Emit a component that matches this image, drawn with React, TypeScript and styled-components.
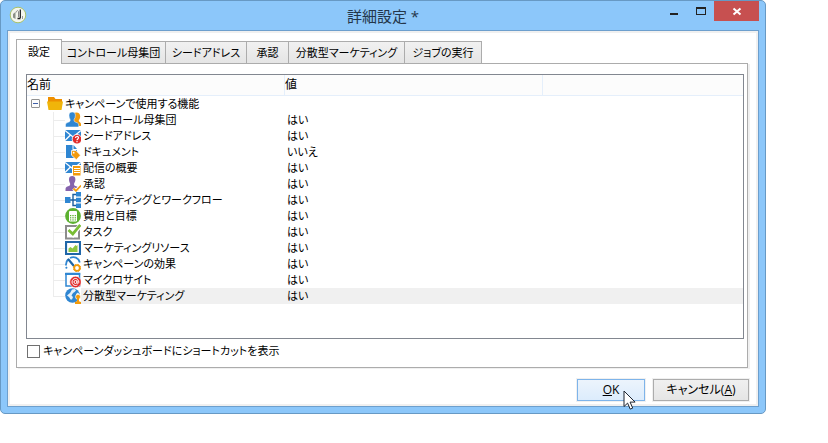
import React, { useState } from "react";
import styled, { createGlobalStyle, css } from "styled-components";

const GlobalStyle = createGlobalStyle`
  * { box-sizing: border-box; }
  body {
    margin: 0;
    background: #fff;
    color: #000;
    font: 11px/16px "Open Sans", "Noto Sans CJK JP", sans-serif;
    font-feature-settings: "palt";
  }
  button, input { font: inherit; font-feature-settings: inherit; color: inherit; margin: 0; }
`;

const Page = styled.main`
  padding: 0 62px 29px 0;
`;

const Window = styled.section`
  display: flex;
  flex-direction: column;
  padding: 0 6px 6px;
  background: #8cc7fa;
  border: 1px solid #6799c4;
  border-radius: 5px;
`;

const TitleBar = styled.header`
  display: grid;
  grid-template-columns: 104px 1fr 104px;
  height: 29px;
`;

const AppIcon = styled.svg`
  width: 18px;
  height: 18px;
  margin: 5px 0 0 2px;
`;

const Title = styled.h1`
  margin: 0;
  padding-top: 4px;
  color: #24364a;
  font-size: 15px;
  font-weight: 400;
  line-height: 22px;
  text-align: center;
`;

const WindowControls = styled.div`
  display: flex;
  justify-content: flex-end;
  align-items: flex-start;
`;

const WindowButton = styled.button<{ $close?: boolean }>`
  display: flex;
  width: ${(p) => (p.$close ? 45 : 27)}px;
  height: 20px;
  padding: 0;
  align-items: center;
  justify-content: center;
  border: 0;
  background: ${(p) => (p.$close ? "#c75050" : "transparent")};
`;

const Client = styled.div`
  padding: 8px 9px 5px 8px;
  background: #fff;
  border: 1px solid #6d9fcd;
  box-shadow: inset 0 0 0 2px #f0f0f0;
`;

const TabList = styled.div`
  display: flex;
  align-items: flex-end;
  height: 24px;
`;

const Tab = styled.button<{ $width: number; $active: boolean }>`
  flex: 0 0 ${(p) => p.$width}px;
  height: 22px;
  padding: 0;
  border: 1px solid #acacac;
  border-left-width: 0;
  border-bottom: 0;
  background: linear-gradient(#f1f1f1, #e5e5e5);
  line-height: 20px;
  white-space: nowrap;
  ${(p) =>
    p.$active &&
    css`
      height: 25px;
      margin-bottom: -1px;
      border-left-width: 1px;
      background: #fff;
      z-index: 1;
    `}
`;

const Pane = styled.div`
  margin-right: 1px;
  padding: 10px 3px 4px 9px;
  border: 1px solid #acacac;
  box-shadow: 2px 1px 0 #f0f0f0;
`;

const TreeBox = styled.div`
  min-height: 265px;
  border: 1px solid #828790;
`;

const TreeTable = styled.table`
  width: 100%;
  table-layout: fixed;
  border-collapse: separate;
  border-spacing: 0;
`;

const HeadCell = styled.th<{ $width?: number }>`
  width: ${(p) => (p.$width ? `${p.$width}px` : "auto")};
  height: 21px;
  padding: 0;
  background: #fcfcfc;
  border-bottom: 1px solid #e5effb;
  border-right: ${(p) => (p.$width ? "1px solid #e5effb" : "0")};
  font-size: 12px;
  font-weight: 400;
  text-align: left;
`;

const Cell = styled.td<{ $selected?: boolean }>`
  height: 16px;
  padding: 0 0 0 2px;
  background: ${(p) => (p.$selected ? "#f0f0f0" : "transparent")};
  line-height: 16px;
  white-space: nowrap;
`;

const TreeCell = styled.td`
  height: 16px;
  padding: 0;
`;

const Node = styled.div`
  display: flex;
  height: 16px;
  line-height: 16px;
  white-space: nowrap;
`;

const NodeLabel = styled.span<{ $selected?: boolean }>`
  flex: 1;
  padding-left: 2px;
  background: ${(p) => (p.$selected ? "#f0f0f0" : "transparent")};
`;

const Toggle = styled.button`
  display: flex;
  width: 9px;
  height: 9px;
  margin: 3px 7px 0 4px;
  padding: 0;
  border: 1px solid #919191;
  border-radius: 1px;
  background: #fcfcfc;
  align-items: center;
  justify-content: center;

  &::before {
    content: "";
    width: 5px;
    height: 1px;
    background: #3f5fa8;
  }
`;

const Branch = styled.span<{ $last: boolean }>`
  width: 12px;
  height: ${(p) => (p.$last ? 9 : 16)}px;
  margin-left: 26px;
  border-left: 1px solid #ececec;
  background: linear-gradient(#ececec, #ececec) 0 8px / 100% 1px no-repeat;
`;

const Icon = styled.svg`
  flex: none;
  width: 16px;
  height: 16px;
`;

const CheckLabel = styled.label`
  display: flex;
  align-items: center;
  gap: 3px;
  height: 24px;
  padding-left: 1px;
`;

const CheckBox = styled.input`
  appearance: none;
  width: 13px;
  height: 13px;
  border: 1px solid #707070;
  background: #fff;

  &:checked {
    box-shadow: inset 0 0 0 2px #fff;
    background: #444;
  }
`;

const Footer = styled.footer`
  display: flex;
  justify-content: flex-end;
  gap: 8px;
  padding-top: 11px;
`;

const PushButton = styled.button<{ $primary?: boolean }>`
  position: relative;
  width: ${(p) => (p.$primary ? 68 : 96)}px;
  height: 22px;
  padding: 0;
  border: 1px solid ${(p) => (p.$primary ? "#7eb4ea" : "#acacac")};
  background: ${(p) =>
    p.$primary ? "linear-gradient(#ecf4fc, #dcecfc)" : "linear-gradient(#f0f0f0, #e5e5e5)"};
  box-shadow: 0 0 0 1px #f0f0f0;
  font-size: 12px;
  line-height: 20px;
`;

const Cursor = styled.svg`
  position: absolute;
  top: 10px;
  left: 45px;
  width: 13px;
  height: 20px;
  pointer-events: none;
`;

const BLUE = "#2f86d2";
const ORANGE = "#f29a0c";
const RED = "#e02b2b";
const GREEN = "#5cb130";

const person =
  "M4 3.200C4 1.200 5.300 0 7.200 0s3.200 1.200 3.200 3.200c0 1.700-.5 3.200-1.300 4.200v1.700c.3 1 3.600 1.400 4.300 2.600.3.600.3 2.100.3 3.300H.5c0-1.200 0-2.700.3-3.300.8-1.200 4-1.600 4.300-2.600V7.400C4.400 6.400 4 4.900 4 3.200Z";

const Envelope = () => (
  <>
    <path fill={BLUE} d="M0 2h16v11H0z" />
    <path
      fill="none"
      stroke="#fff"
      strokeWidth="1.300"
      d="M0 2.500 8 9l8-6.500M0 12.500l5.500-5.500M16 12.500l-5.500-5.500"
    />
  </>
);

const icons: Record<string, React.ReactNode> = {
  folder: (
    <>
      <path fill="#ee8f00" d="M1 1h6l1.500 2H15v5H1z" />
      <path fill="#f0b50a" d="M0 5.500h16l-1.500 8.500h-13z" />
    </>
  ),
  population: (
    <>
      <path
        fill={ORANGE}
        d="M8.500 1.500C9.300.8 10.300.5 11.500.5c2.200 0 3.700 1.500 3.700 3.700 0 1.700-.6 3-1.400 3.900v1.200c.5.9 2.200 1.200 2.200 2.700v2H9z"
      />
      <path fill={BLUE} stroke="#fff" strokeWidth=".5" d={person} />
    </>
  ),
  seed: (
    <>
      <Envelope />
      <circle cx="12" cy="11.200" r="4.800" fill={RED} stroke="#fff" strokeWidth=".8" />
      <path fill="none" stroke="#fff" strokeWidth="1.200" d="M10.500 10c0-2 3-2 3-.2 0 1.200-1.500 1.100-1.500 2.400" />
      <path fill="#fff" d="M11.400 13h1.200v1.200h-1.200z" />
    </>
  ),
  document: (
    <>
      <path fill={BLUE} d="M1 1h6.500v5H12v8H1z" />
      <path fill={BLUE} d="M8.500 1 12 5H8.500z" />
      <path fill={ORANGE} stroke="#fff" strokeWidth=".8" d="M6.500 6.500H11l4.500 4.700-4.200 4.500-4.800-4.500z" />
      <circle cx="8.700" cy="8.700" r=".9" fill="#fff" />
    </>
  ),
  delivery: (
    <>
      <Envelope />
      <path fill={ORANGE} stroke="#fff" d="M7.500 5.500H16V16H7.500z" />
      <path fill="none" stroke="#fff" d="M9 8.500h6M9 10.500h6M9 12.500h6" />
    </>
  ),
  approval: (
    <>
      <path fill="#8563ad" d={person} />
      <path fill="none" stroke="#fff" strokeWidth="3.500" d="M8.500 12.500l2.500 2.500 5-5.500" />
      <path fill="none" stroke={ORANGE} strokeWidth="1.800" d="M8.500 12.500l2.500 2.300 5-5.300" />
    </>
  ),
  workflow: (
    <>
      <path fill="none" stroke="#1d5f9f" strokeWidth="1.400" d="M5 8h7M12 2.500H8v11h4" />
      <path fill={BLUE} d="M0 5h5.500v6H0zM11 0h5v4.600h-5zM11 5.700h5v4.600h-5zM11 11.400h5V16h-5z" />
    </>
  ),
  cost: (
    <>
      <circle cx="8" cy="8" r="7.900" fill={GREEN} />
      <path
        fill="none"
        stroke="#fff"
        d="M4.500 3.500h7v9.500h-7zM4.500 6.500h7M4.500 8.700h7M4.500 10.900h7M6.800 6.500V13M9.200 6.500V13"
      />
      <path fill="#fff" d="M5 4h6v2.500H5z" />
    </>
  ),
  task: (
    <>
      <path fill="#fff" stroke="#8c8c8c" strokeWidth="2" d="M1 2h13v12.500H1z" />
      <path fill="none" stroke="#fff" strokeWidth="4.500" d="M4 6.500l4 4L15.500 1" />
      <path fill="none" stroke="#79bd35" strokeWidth="2.800" d="M3.500 6l4.300 4L15.300 1" />
    </>
  ),
  resource: (
    <>
      <path fill="#fff" stroke="#1f66a8" strokeWidth="2.200" d="M1 2h14v12H1z" />
      <path fill="#8cc63f" d="M3.500 12V8.500L5.500 7l2 1.500L10.500 5l1 1 1-1V12z" />
    </>
  ),
  effect: (
    <>
      <path
        fill="none"
        stroke={BLUE}
        strokeWidth="1.800"
        d="M1 9.500C.8 7 1.500 5 3 3.500M1.800 12.500 1 11M5 2c4-2 8.500-.3 9.800 4.500"
      />
      <path fill="none" stroke="#1f66a8" strokeWidth="2.200" strokeLinecap="round" d="M3.500 3.500l5 6" />
      <circle cx="12" cy="12" r="2.800" fill="#fff" stroke={ORANGE} strokeWidth="1.800" />
      <circle cx="12" cy="12" r="3.600" fill="none" stroke={ORANGE} strokeDasharray="1.500 1.330" />
    </>
  ),
  microsite: (
    <>
      <path fill="#fff" stroke={BLUE} strokeWidth="1.500" d="M1 1.500h13.500V14H1z" />
      <path fill={BLUE} d="M0 1h15.200v2H0z" />
      <circle cx="10.500" cy="10" r="5.800" fill={RED} stroke="#fff" strokeWidth=".6" />
      <circle cx="10.500" cy="10" r="1.500" fill="none" stroke="#fff" />
      <path
        fill="none"
        stroke="#fff"
        d="M12 8.300v2.500c.3 1.200 1.800.8 1.800-.8C13.800 8 12.300 6.500 10.500 6.500S7 8 7 10s1.500 3.500 3.500 3.500c.8 0 1.500-.2 2-.6"
      />
    </>
  ),
  distributed: (
    <>
      <circle cx="7.500" cy="7.500" r="7.300" fill={BLUE} />
      <path
        fill="#e6f1fa"
        d="M7 1.500l3-.5 1 1.500L9.500 4 8 5 6.500 7.500 8 9l-1 2.500H5.500L4 9 2 7.500 5 5zM11 6l2-1.500L15 7l-2 2h-2z"
      />
      <circle cx="13" cy="8.800" r="2.500" fill={ORANGE} stroke="#fff" strokeWidth=".7" />
      <path fill={ORANGE} d="M12 10h2v3.200l2 .8v2h-6v-2l2-.8z" />
    </>
  ),
};

const tabs = [
  { label: "設定", width: 46 },
  { label: "コントロール母集団", width: 104 },
  { label: "シードアドレス", width: 81 },
  { label: "承認", width: 42 },
  { label: "分散型マーケティング", width: 116 },
  { label: "ジョブの実行", width: 77 },
];

const features = [
  { icon: "population", name: "コントロール母集団", value: "はい" },
  { icon: "seed", name: "シードアドレス", value: "はい" },
  { icon: "document", name: "ドキュメント", value: "いいえ" },
  { icon: "delivery", name: "配信の概要", value: "はい" },
  { icon: "approval", name: "承認", value: "はい" },
  { icon: "workflow", name: "ターゲティングとワークフロー", value: "はい" },
  { icon: "cost", name: "費用と目標", value: "はい" },
  { icon: "task", name: "タスク", value: "はい" },
  { icon: "resource", name: "マーケティングリソース", value: "はい" },
  { icon: "effect", name: "キャンペーンの効果", value: "はい" },
  { icon: "microsite", name: "マイクロサイト", value: "はい" },
  { icon: "distributed", name: "分散型マーケティング", value: "はい" },
];

export default function App() {
  const [tab, setTab] = useState(0);
  const [open, setOpen] = useState(true);
  const [selected, setSelected] = useState(features.length - 1);

  return (
    <Page>
      <GlobalStyle />
      <Window aria-labelledby="dialog-title">
        <TitleBar>
          <AppIcon viewBox="0 0 18 18" aria-hidden="true">
            <circle cx="9" cy="9" r="7.800" fill="#f4f6ee" stroke="#a9c26a" />
            <path fill="#8a8f88" d="M4 8l2.500-2v7L4 11.500z" />
            <path fill="none" stroke="#888" d="M7 6.500C7.500 4.500 9 4 9.500 5.500V11" />
            <path fill="none" stroke="#222" strokeWidth="1.300" d="M11.300 3.500V12M8.500 12.500h3" />
            <path stroke="#999" d="M13.500 10v3" />
          </AppIcon>
          <Title id="dialog-title">詳細設定 *</Title>
          <WindowControls>
            <WindowButton aria-label="最小化">
              <svg width="10" height="10" aria-hidden="true">
                <path fill="#222" d="M1 7h8v2H1z" />
              </svg>
            </WindowButton>
            <WindowButton aria-label="最大化">
              <svg width="10" height="10" aria-hidden="true">
                <path fill="#222" fillRule="evenodd" d="M0 1h10v8H0zM1 3v5h8V3z" />
              </svg>
            </WindowButton>
            <WindowButton $close aria-label="閉じる">
              <svg width="10" height="9" aria-hidden="true">
                <path fill="none" stroke="#fff" strokeWidth="2" d="M1.500 1.500l7 6M8.500 1.500l-7 6" />
              </svg>
            </WindowButton>
          </WindowControls>
        </TitleBar>
        <Client>
          <TabList role="tablist">
            {tabs.map((t, i) => (
              <Tab
                key={t.label}
                role="tab"
                aria-selected={i === tab}
                $active={i === tab}
                $width={t.width}
                onClick={() => setTab(i)}
              >
                {t.label}
              </Tab>
            ))}
          </TabList>
          <Pane role="tabpanel">
            <TreeBox>
              <TreeTable>
                <thead>
                  <tr>
                    <HeadCell $width={258}>名前</HeadCell>
                    <HeadCell $width={258}>値</HeadCell>
                    <HeadCell aria-hidden="true" />
                  </tr>
                </thead>
                <tbody>
                  <tr>
                    <TreeCell colSpan={3}>
                      <Node>
                        <Toggle
                          aria-label="キャンペーンで使用する機能"
                          aria-expanded={open}
                          onClick={() => setOpen(!open)}
                        />
                        <Icon viewBox="0 0 16 16" aria-hidden="true">{icons.folder}</Icon>
                        <NodeLabel>キャンペーンで使用する機能</NodeLabel>
                      </Node>
                    </TreeCell>
                  </tr>
                  {open &&
                    features.map((f, i) => (
                      <tr key={f.name} aria-selected={i === selected} onClick={() => setSelected(i)}>
                        <TreeCell>
                          <Node>
                            <Branch $last={i === features.length - 1} />
                            <Icon viewBox="0 0 16 16" aria-hidden="true">{icons[f.icon]}</Icon>
                            <NodeLabel $selected={i === selected}>{f.name}</NodeLabel>
                          </Node>
                        </TreeCell>
                        <Cell colSpan={2} $selected={i === selected}>{f.value}</Cell>
                      </tr>
                    ))}
                </tbody>
              </TreeTable>
            </TreeBox>
            <CheckLabel>
              <CheckBox type="checkbox" />
              キャンペーンダッシュボードにショートカットを表示
            </CheckLabel>
          </Pane>
          <Footer>
            <PushButton $primary>
              <u>O</u>K
              <Cursor viewBox="0 0 13 20" aria-hidden="true">
                <path fill="#fff" stroke="#1c2430" d="M1 1v15.500l3.600-3.400 2.600 6 2.500-1-2.600-6h5z" />
              </Cursor>
            </PushButton>
            <PushButton>
              キャンセル(<u>A</u>)
            </PushButton>
          </Footer>
        </Client>
      </Window>
    </Page>
  );
}
